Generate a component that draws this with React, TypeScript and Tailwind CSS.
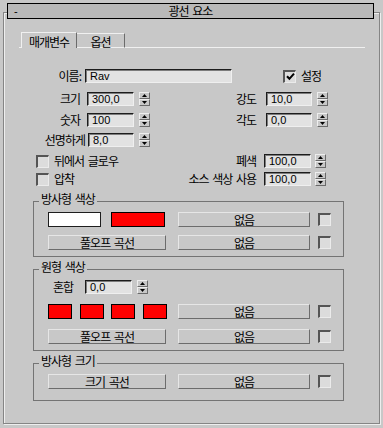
import type { ReactNode } from 'react';

const NUM = "font-['Liberation_Sans',Arial,sans-serif] text-[11px] tracking-normal";

function Field({ value, className }: { value: string; className: string }) {
  return (
    <div
      className={`h-[14px] flex items-center pl-[4px] bg-[#e2e2e2] border-t border-l border-b border-r border-t-[#1c1c1c] border-l-[#1c1c1c] border-b-[#efefef] border-r-[#efefef] shadow-[inset_1px_1px_0_#7c7c7c] ${NUM} ${className}`}
    >
      {value}
    </div>
  );
}

function Spinner({ className = '' }: { className?: string }) {
  return (
    <div className={`w-[11px] h-[14px] flex flex-col shrink-0 ${className}`}>
      <div className="h-[7px] flex items-center justify-center border-t border-l border-b border-r border-t-[#eeeeee] border-l-[#eeeeee] border-b-[#6a6a6a] border-r-[#6a6a6a]">
        <svg width="5" height="3" viewBox="0 0 5 3">
          <path d="M2.5 0 L5 3 L0 3 Z" fill="#000" />
        </svg>
      </div>
      <div className="h-[7px] flex items-center justify-center border-t border-l border-b border-r border-t-[#eeeeee] border-l-[#eeeeee] border-b-[#6a6a6a] border-r-[#6a6a6a]">
        <svg width="5" height="3" viewBox="0 0 5 3">
          <path d="M0 0 L5 0 L2.5 3 Z" fill="#000" />
        </svg>
      </div>
    </div>
  );
}

function Check({ checked = false, className = '' }: { checked?: boolean; className?: string }) {
  return (
    <div
      className={`w-[13px] h-[13px] shrink-0 flex items-center justify-center bg-[#dcdcdc] border-t-2 border-l-2 border-b border-r border-t-[#555555] border-l-[#555555] border-b-[#ebebeb] border-r-[#ebebeb] ${className}`}
    >
      {checked && (
        <svg width="9" height="9" viewBox="0 0 9 9">
          <path d="M1 4.2 L3.4 6.8 L8 1.6" stroke="#000" strokeWidth="2" fill="none" />
        </svg>
      )}
    </div>
  );
}

function Btn({ label, className }: { label: string; className: string }) {
  return (
    <div
      className={`h-[15px] shrink-0 flex items-center justify-center border-t border-l border-b border-r border-t-[#e6e6e6] border-l-[#e6e6e6] border-b-[#6c6c6c] border-r-[#6c6c6c] ${className}`}
    >
      {label}
    </div>
  );
}

function Group({ title, className, children }: { title: string; className: string; children: ReactNode }) {
  return (
    <div className={`relative shrink-0 ml-[29px] w-[311px] border border-[#747474] flex flex-col ${className}`}>
      <span className="absolute -top-[10px] left-[5px] px-[2px] bg-[#c8c8c8] whitespace-nowrap">{title}</span>
      {children}
    </div>
  );
}

export default function App() {
  return (
    <div className="w-[383px] h-[428px] overflow-hidden bg-[#c8c8c8] text-black text-[12px] leading-[14px] tracking-[-1px] [word-spacing:2px] font-['Noto_Sans_CJK_KR','Noto_Sans',sans-serif] pt-[12px] pl-[3px]">
      <div className="w-[377px] h-[412px] flex flex-col border border-[#858585] shadow-[1px_1px_0_#eeeeee,inset_1px_1px_0_#eeeeee]">
        {/* rollout title */}
        <div className="-mt-[10px] ml-[3px] w-[367px] h-[16px] shrink-0 grid grid-cols-[20px_1fr_20px] items-center border border-black bg-[#b9b9b9]">
          <span className={`pl-[6px] ${NUM}`}>-</span>
          <span className="text-center">광선 요소</span>
        </div>

        {/* tabs */}
        <div className="mt-[13px] ml-[15px] h-[16px] shrink-0 flex items-end">
          <div className="w-[2px] h-px bg-[#f0f0f0]" />
          <div className="w-[56px] h-[16px] flex justify-center pt-[2px] border-t border-l border-r border-t-[#f0f0f0] border-l-[#f0f0f0] border-r-[#6c6c6c]">
            매개변수
          </div>
          <div className="w-[48px] h-[15px] flex justify-center pt-[1px] border-t border-r border-b border-t-[#f0f0f0] border-r-[#6c6c6c] border-b-[#f0f0f0]">
            옵션
          </div>
          <div className="w-[240px] h-px bg-[#f0f0f0]" />
        </div>

        {/* name */}
        <div className="mt-[21px] h-[14px] shrink-0 flex items-center">
          <span className="ml-[16px] w-[61px] text-right">이름:</span>
          <Field value="Rav" className="ml-[4px] w-[147px]" />
          <Check checked className="ml-[51px]" />
          <span className="ml-[5px]">설정</span>
        </div>

        <div className="mt-[9px] h-[14px] shrink-0 flex items-center">
          <span className="ml-[16px] w-[60px] text-right">크기</span>
          <Field value="300,0" className="ml-[7px] w-[47px]" />
          <Spinner className="ml-[5px]" />
          <span className="w-[106px] text-right">강도</span>
          <Field value="10,0" className="ml-[10px] w-[46px]" />
          <Spinner className="ml-[5px]" />
        </div>

        <div className="mt-[7px] h-[14px] shrink-0 flex items-center">
          <span className="ml-[16px] w-[60px] text-right">숫자</span>
          <Field value="100" className="ml-[7px] w-[47px]" />
          <Spinner className="ml-[5px]" />
          <span className="w-[106px] text-right">각도</span>
          <Field value="0,0" className="ml-[10px] w-[46px]" />
          <Spinner className="ml-[5px]" />
        </div>

        <div className="mt-[6px] h-[14px] shrink-0 flex items-center">
          <span className="ml-[16px] w-[65px] flex justify-end whitespace-nowrap">선명하게</span>
          <Field value="8,0" className="ml-[3px] w-[46px]" />
          <Spinner className="ml-[5px]" />
        </div>

        <div className="mt-[7px] h-[14px] shrink-0 flex items-center">
          <div className="ml-[32px] w-[140px] flex items-center">
            <Check />
            <span className="ml-[5px] whitespace-nowrap">뒤에서 글로우</span>
          </div>
          <span className="w-[80px] flex justify-end whitespace-nowrap">폐색</span>
          <Field value="100,0" className="ml-[8px] w-[47px]" />
          <Spinner className="ml-[4px]" />
        </div>

        <div className="mt-[4px] h-[14px] shrink-0 flex items-center">
          <div className="ml-[32px] w-[140px] flex items-center">
            <Check />
            <span className="ml-[5px] whitespace-nowrap">압착</span>
          </div>
          <span className="w-[80px] flex justify-end whitespace-nowrap">소스 색상 사용</span>
          <Field value="100,0" className="ml-[8px] w-[47px]" />
          <Spinner className="ml-[4px]" />
        </div>

        <Group title="방사형 색상" className="mt-[15px] h-[56px]">
          <div className="mt-[10px] h-[15px] flex items-center">
            <div className="ml-[14px] w-[53px] h-[15px] bg-white border border-[#1e1e1e]" />
            <div className="ml-[10px] w-[54px] h-[15px] bg-[#ff0000] border border-black" />
            <Btn label="없음" className="ml-[13px] w-[132px]" />
            <Check className="ml-[8px]" />
          </div>
          <div className="mt-[8px] h-[15px] flex items-center">
            <Btn label="풀오프 곡선" className="ml-[14px] w-[118px]" />
            <Btn label="없음" className="ml-[12px] w-[132px]" />
            <Check className="ml-[8px]" />
          </div>
        </Group>

        <Group title="원형 색상" className="mt-[12px] h-[82px]">
          <div className="mt-[10px] h-[14px] flex items-center">
            <span className="ml-[19px] w-[25px] whitespace-nowrap">혼합</span>
            <Field value="0,0" className="ml-[7px] w-[47px]" />
            <Spinner className="ml-[5px]" />
          </div>
          <div className="mt-[10px] h-[15px] flex items-center">
            <div className="ml-[14px] w-[24px] h-[15px] bg-[#ff0000] border border-black" />
            <div className="ml-[8px] w-[24px] h-[15px] bg-[#ff0000] border border-black" />
            <div className="ml-[7px] w-[24px] h-[15px] bg-[#ff0000] border border-black" />
            <div className="ml-[8px] w-[24px] h-[15px] bg-[#ff0000] border border-black" />
            <Btn label="없음" className="ml-[11px] w-[132px]" />
            <Check className="ml-[8px]" />
          </div>
          <div className="mt-[10px] h-[15px] flex items-center">
            <Btn label="풀오프 곡선" className="ml-[14px] w-[118px]" />
            <Btn label="없음" className="ml-[12px] w-[132px]" />
            <Check className="ml-[8px]" />
          </div>
        </Group>

        <Group title="방사형 크기" className="mt-[12px] h-[38px]">
          <div className="mt-[10px] h-[15px] flex items-center">
            <Btn label="크기 곡선" className="ml-[14px] w-[118px]" />
            <Btn label="없음" className="ml-[12px] w-[132px]" />
            <Check className="ml-[8px]" />
          </div>
        </Group>
      </div>
    </div>
  );
}
